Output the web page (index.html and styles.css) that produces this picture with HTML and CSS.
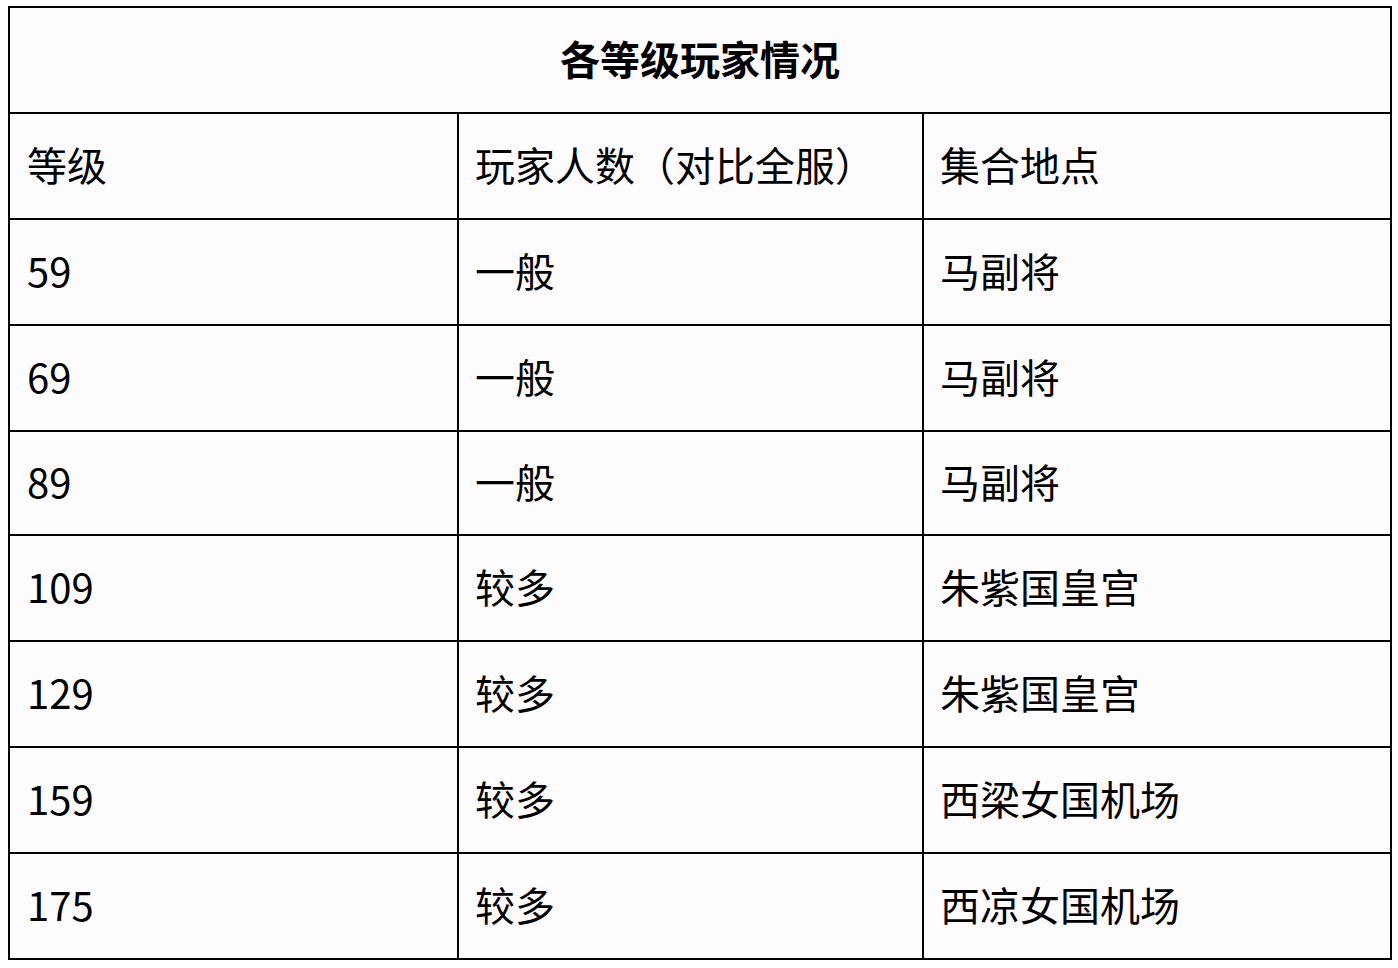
FILE: index.html
```html
<!DOCTYPE html>
<html lang="zh-CN">
<head>
<meta charset="utf-8">
<title>各等级玩家情况</title>
<link rel="stylesheet" href="styles.css">
</head>
<body>
<table class="stats">
  <colgroup>
    <col class="c1"><col class="c2"><col class="c3">
  </colgroup>
  <tr class="title-row"><th colspan="3">各等级玩家情况</th></tr>
  <tr><td>等级</td><td>玩家人数（对比全服）</td><td>集合地点</td></tr>
  <tr><td>59</td><td>一般</td><td>马副将</td></tr>
  <tr><td>69</td><td>一般</td><td>马副将</td></tr>
  <tr class="short"><td>89</td><td>一般</td><td>马副将</td></tr>
  <tr><td>109</td><td>较多</td><td>朱紫国皇宫</td></tr>
  <tr><td>129</td><td>较多</td><td>朱紫国皇宫</td></tr>
  <tr><td>159</td><td>较多</td><td>西梁女国机场</td></tr>
  <tr><td>175</td><td>较多</td><td>西凉女国机场</td></tr>
</table>
</body>
</html>
```
FILE: styles.css
```css
html, body {
  margin: 0;
  padding: 0;
  background: #ffffff;
}
body {
  padding: 6px 0 0 8px;
  font-family: "Noto Sans CJK SC", "Noto Sans", sans-serif;
  color: #000;
}
.stats {
  border-collapse: collapse;
  table-layout: fixed;
  width: 1382px;
  background: #fefcfe;
}
.c1 { width: 449px; }
.c2 { width: 465px; }
.c3 { width: 468px; }
.stats th, .stats td {
  border: 2px solid #000;
  height: 99px;
  padding: 0 0 5px 16px;
  font-size: 40px;
  font-weight: 400;
  line-height: 1;
  text-align: left;
  vertical-align: middle;
  white-space: nowrap;
}
.stats td:first-child {
  padding-left: 17px;
}
.stats .short td {
  height: 97px;
}
.stats th {
  text-align: center;
  padding: 0 0 5px 0;
  font-weight: 700;
}
```
